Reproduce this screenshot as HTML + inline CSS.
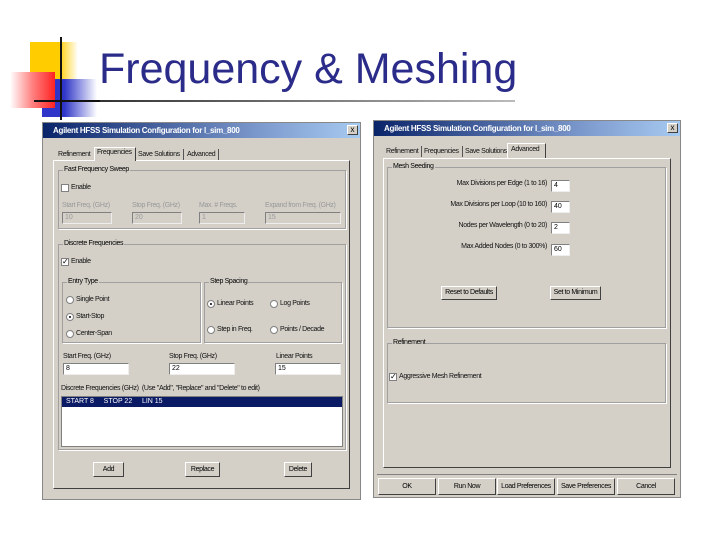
<!DOCTYPE html>
<html><head><meta charset="utf-8"><style>
*{margin:0;padding:0;box-sizing:border-box}
body{width:720px;height:540px;background:#fff;position:relative;overflow:hidden;font-family:"Liberation Sans",sans-serif}
.a{position:absolute}
.t{position:absolute;font-size:7px;color:#111;white-space:nowrap;letter-spacing:-0.35px}
.g{color:#999}
.dlg{position:absolute;background:#d4d0c8;border:1px solid #888}
.tb{position:absolute;height:15px;background:linear-gradient(90deg,#0a246a,#7f9ccf 70%,#a6caf0);color:#fff;font-size:8px;font-weight:bold;line-height:15px;padding-left:10px;letter-spacing:-0.3px}
.x{position:absolute;width:11px;height:10px;background:#d4d0c8;border:1px solid #fff;border-right-color:#404040;border-bottom-color:#404040;font-size:8px;line-height:8px;text-align:center;color:#000}
.grp{position:absolute;border:1px solid #a0a0a0;box-shadow:1px 1px 0 #fff}
.lg{position:absolute;top:-5px;left:4px;background:#d4d0c8;padding:0 1px;font-size:7px;letter-spacing:-0.35px;white-space:nowrap}
.in{position:absolute;background:#fff;border:1px solid #808080;border-right-color:#eee;border-bottom-color:#eee;font-size:7px;line-height:10px;padding-left:2px}
.dis{background:#d4d0c8;color:#999}
.btn{position:absolute;border:1px solid #fff;border-right-color:#404040;border-bottom-color:#404040;font-size:7px;text-align:center;letter-spacing:-0.35px;white-space:nowrap}
.cb{position:absolute;width:8px;height:8px;background:#fff;border:1px solid #808080;font-size:8px;line-height:6px;text-align:center}
.rd{position:absolute;width:8px;height:8px;border-radius:50%;background:#fff;border:1px solid #808080}
.rd.on::after{content:"";position:absolute;left:2px;top:2px;width:2px;height:2px;background:#000;border-radius:50%}
.pnl{position:absolute;border:1px solid #fff;border-right-color:#404040;border-bottom-color:#404040}
.r{position:absolute;right:173px;font-size:7px;letter-spacing:-0.35px;white-space:nowrap;color:#111}
</style></head><body>
<!-- decoration -->
<div class="a" style="left:30px;top:42px;width:48px;height:38px;background:linear-gradient(90deg,#ffcc00 60%,#fff)"></div>
<div class="a" style="left:42px;top:79px;width:55px;height:38px;background:linear-gradient(90deg,#2e35c8 40%,#fff)"></div>
<div class="a" style="left:10px;top:72px;width:45px;height:36px;background:linear-gradient(90deg,#fff,#ff8080 50%,#f22)"></div>
<div class="a" style="left:60px;top:37px;width:2px;height:83px;background:#111"></div>
<div class="a" style="left:34px;top:100px;width:70px;height:2px;background:#111"></div>
<div class="a" style="left:100px;top:100px;width:415px;height:2px;background:linear-gradient(90deg,#333,#bbb)"></div>
<div class="a" style="left:99px;top:43px;font-size:43px;color:#2b2b8a;line-height:52px">Frequency &amp; Meshing</div>

<!-- left dialog -->
<div class="dlg" style="left:42px;top:122px;width:319px;height:378px"></div>
<div class="tb" style="left:43px;top:123px;width:317px">Agilent HFSS Simulation Configuration for l_sim_800</div>
<div class="x" style="left:347px;top:125px">x</div>
<div class="pnl" style="left:53px;top:160px;width:297px;height:329px"></div>
<div class="t" style="left:58px;top:151px">Refinement</div>
<div class="a" style="left:94px;top:147px;width:42px;height:14px;background:#d4d0c8;border:1px solid #fff;border-right-color:#404040;border-bottom:none"></div>
<div class="t" style="left:97px;top:149px">Frequencies</div>
<div class="t" style="left:138px;top:151px">Save Solutions</div>
<div class="a" style="left:183px;top:149px;width:1px;height:11px;background:#555"></div>
<div class="t" style="left:187px;top:151px">Advanced</div>
<div class="a" style="left:218px;top:149px;width:1px;height:11px;background:#555"></div>

<div class="grp" style="left:58px;top:170px;width:288px;height:59px"><span class="lg">Fast Frequency Sweep</span></div>
<div class="cb" style="left:61px;top:184px"></div><div class="t" style="left:71px;top:184px">Enable</div>
<div class="t g" style="left:62px;top:202px">Start Freq. (GHz)</div>
<div class="t g" style="left:132px;top:202px">Stop Freq. (GHz)</div>
<div class="t g" style="left:199px;top:202px">Max. # Freqs.</div>
<div class="t g" style="left:265px;top:202px">Expand from Freq. (GHz)</div>
<div class="in dis" style="left:62px;top:212px;width:50px;height:12px">10</div>
<div class="in dis" style="left:132px;top:212px;width:50px;height:12px">20</div>
<div class="in dis" style="left:199px;top:212px;width:46px;height:12px">1</div>
<div class="in dis" style="left:265px;top:212px;width:76px;height:12px">15</div>

<div class="grp" style="left:58px;top:244px;width:288px;height:206px"><span class="lg">Discrete Frequencies</span></div>
<div class="cb" style="left:61px;top:258px">✓</div><div class="t" style="left:71px;top:258px">Enable</div>
<div class="grp" style="left:62px;top:282px;width:139px;height:61px"><span class="lg">Entry Type</span></div>
<div class="rd" style="left:66px;top:296px"></div><div class="t" style="left:76px;top:296px">Single Point</div>
<div class="rd on" style="left:66px;top:313px"></div><div class="t" style="left:76px;top:313px">Start-Stop</div>
<div class="rd" style="left:66px;top:330px"></div><div class="t" style="left:76px;top:330px">Center-Span</div>
<div class="grp" style="left:204px;top:282px;width:138px;height:61px"><span class="lg">Step Spacing</span></div>
<div class="rd on" style="left:207px;top:300px"></div><div class="t" style="left:217px;top:300px">Linear Points</div>
<div class="rd" style="left:270px;top:300px"></div><div class="t" style="left:280px;top:300px">Log Points</div>
<div class="rd" style="left:207px;top:326px"></div><div class="t" style="left:217px;top:326px">Step in Freq.</div>
<div class="rd" style="left:270px;top:326px"></div><div class="t" style="left:280px;top:326px">Points / Decade</div>
<div class="t" style="left:63px;top:353px">Start Freq. (GHz)</div>
<div class="t" style="left:169px;top:353px">Stop Freq. (GHz)</div>
<div class="t" style="left:276px;top:353px">Linear Points</div>
<div class="in" style="left:63px;top:363px;width:66px;height:12px">8</div>
<div class="in" style="left:169px;top:363px;width:66px;height:12px">22</div>
<div class="in" style="left:275px;top:363px;width:66px;height:12px">15</div>
<div class="t" style="left:61px;top:385px">Discrete Frequencies (GHz)&nbsp; (Use "Add", "Replace" and "Delete" to edit)</div>
<div class="a" style="left:61px;top:396px;width:282px;height:51px;background:#fff;border:1px solid #808080"></div>
<div class="a" style="left:62px;top:397px;width:280px;height:10px;background:#0a1a64;color:#fff;font-size:7px;line-height:10px;padding-left:2px;white-space:pre"> START 8     STOP 22     LIN 15</div>
<div class="btn" style="left:93px;top:462px;width:31px;height:15px;line-height:13px">Add</div>
<div class="btn" style="left:185px;top:462px;width:35px;height:15px;line-height:13px">Replace</div>
<div class="btn" style="left:284px;top:462px;width:28px;height:15px;line-height:13px">Delete</div>

<!-- right dialog -->
<div class="dlg" style="left:373px;top:120px;width:308px;height:378px"></div>
<div class="tb" style="left:374px;top:121px;width:306px">Agilent HFSS Simulation Configuration for l_sim_800</div>
<div class="x" style="left:667px;top:123px">x</div>
<div class="pnl" style="left:383px;top:158px;width:288px;height:310px"></div>
<div class="t" style="left:386px;top:148px">Refinement</div>
<div class="a" style="left:421px;top:146px;width:1px;height:11px;background:#555"></div>
<div class="t" style="left:424px;top:148px">Frequencies</div>
<div class="a" style="left:462px;top:146px;width:1px;height:11px;background:#555"></div>
<div class="t" style="left:465px;top:148px">Save Solutions</div>
<div class="a" style="left:507px;top:143px;width:39px;height:15px;background:#d4d0c8;border:1px solid #fff;border-right-color:#404040;border-bottom:none"></div>
<div class="t" style="left:511px;top:146px">Advanced</div>
<div class="grp" style="left:387px;top:167px;width:279px;height:161px"><span class="lg">Mesh Seeding</span></div>
<div class="r" style="top:180px">Max Divisions per Edge (1 to 16)</div>
<div class="r" style="top:201px">Max Divisions per Loop (10 to 160)</div>
<div class="r" style="top:222px">Nodes per Wavelength (0 to 20)</div>
<div class="r" style="top:243px">Max Added Nodes (0 to 300%)</div>
<div class="in" style="left:551px;top:180px;width:19px;height:12px">4</div>
<div class="in" style="left:551px;top:201px;width:19px;height:12px">40</div>
<div class="in" style="left:551px;top:222px;width:19px;height:12px">2</div>
<div class="in" style="left:551px;top:244px;width:19px;height:12px">60</div>
<div class="btn" style="left:441px;top:286px;width:56px;height:14px;line-height:12px">Reset to Defaults</div>
<div class="btn" style="left:550px;top:286px;width:51px;height:14px;line-height:12px">Set to Minimum</div>
<div class="grp" style="left:387px;top:343px;width:279px;height:60px"><span class="lg">Refinement</span></div>
<div class="cb" style="left:389px;top:373px">✓</div><div class="t" style="left:399px;top:373px">Aggressive Mesh Refinement</div>
<div class="a" style="left:377px;top:474px;width:300px;height:1px;background:#808080"></div>
<div class="btn" style="left:378px;top:478px;width:58px;height:17px;line-height:15px">OK</div>
<div class="btn" style="left:438px;top:478px;width:58px;height:17px;line-height:15px">Run Now</div>
<div class="btn" style="left:497px;top:478px;width:58px;height:17px;line-height:15px">Load Preferences</div>
<div class="btn" style="left:557px;top:478px;width:58px;height:17px;line-height:15px">Save Preferences</div>
<div class="btn" style="left:617px;top:478px;width:58px;height:17px;line-height:15px">Cancel</div>
</body></html>
